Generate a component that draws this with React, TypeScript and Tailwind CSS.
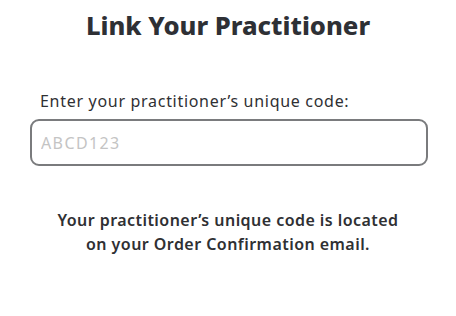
import React from 'react';

const App: React.FC = () => {
  return (
    <div className="w-[456px] h-[316px] bg-white font-['Noto_Sans','Lato',sans-serif] text-[#2f3033]">
      <h1 className="pt-[9px] text-center text-[25.6px] font-extrabold leading-[34px] text-[#2e3035]">
        Link Your Practitioner
      </h1>
      <div className="mt-[48px] px-[30px]">
        <label className="block pl-[10px] text-[16px] leading-[20px] tracking-[0.7px] text-[#2f3033]">
          Enter your practitioner’s unique code:
        </label>
        <input
          type="text"
          placeholder="ABCD123"
          className="mt-[8px] h-[47px] w-[398px] rounded-[9px] border-2 border-[#7a7b7d] px-[9px] text-[16px] tracking-[1.4px] outline-none placeholder:text-[#c4c4c4]"
        />
      </div>
      <p className="mt-[42px] text-center text-[16px] font-semibold leading-[24px] tracking-[0.45px] text-[#2f3033]">
        Your practitioner’s unique code is located
        <br />
        on your Order Confirmation email.
      </p>
    </div>
  );
};

export default App;
